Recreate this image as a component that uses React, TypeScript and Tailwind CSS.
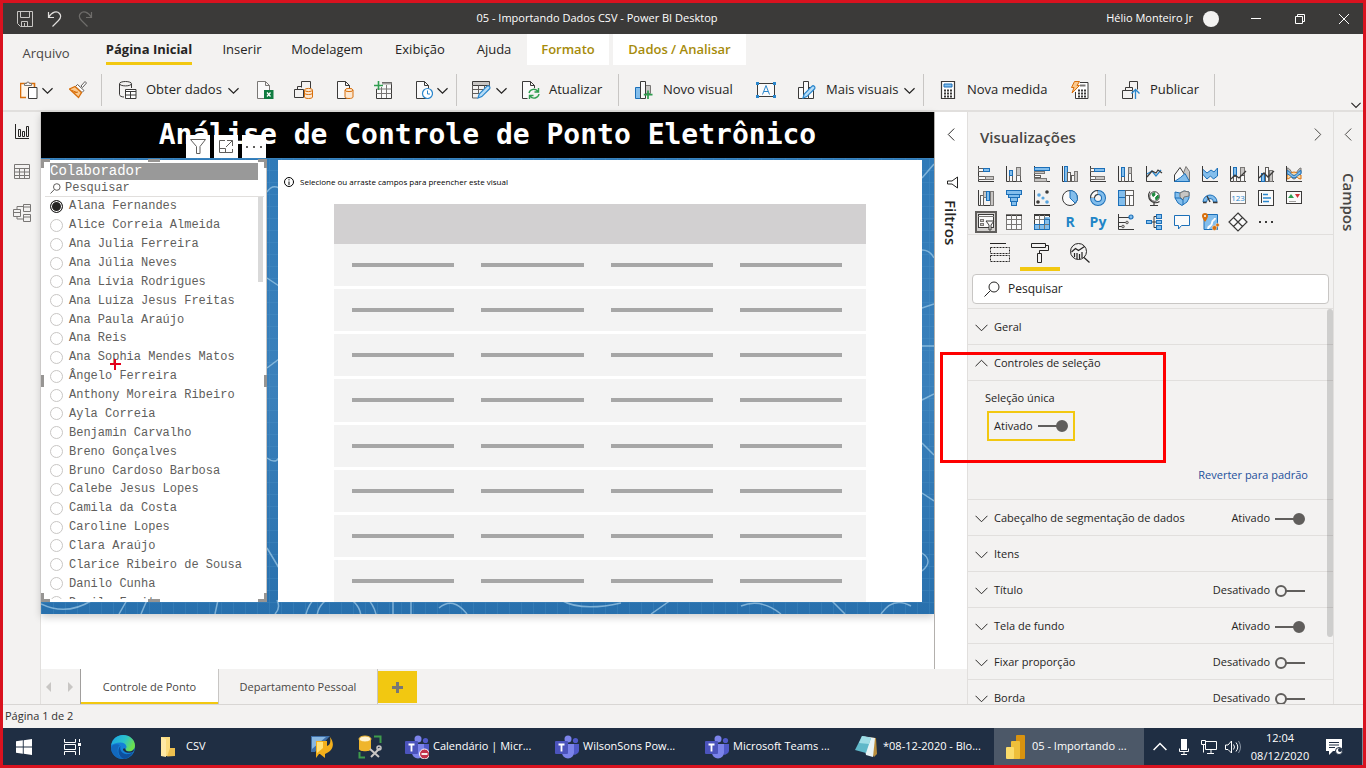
import React from "react";

type Kids = { children?: React.ReactNode };

const DARK = "#3b3a39";
const BLUE = "#1b6fb8";
const SKY = "#83beec";

const people = [
  "Alana Fernandes",
  "Alice Correia Almeida",
  "Ana Julia Ferreira",
  "Ana Júlia Neves",
  "Ana Lívia Rodrigues",
  "Ana Luiza Jesus Freitas",
  "Ana Paula Araújo",
  "Ana Reis",
  "Ana Sophia Mendes Matos",
  "Ângelo Ferreira",
  "Anthony Moreira Ribeiro",
  "Ayla Correia",
  "Benjamin Carvalho",
  "Breno Gonçalves",
  "Bruno Cardoso Barbosa",
  "Calebe Jesus Lopes",
  "Camila da Costa",
  "Caroline Lopes",
  "Clara Araújo",
  "Clarice Ribeiro de Sousa",
  "Danilo Cunha",
  "Danilo Freitas",
];

/* ---------- icon helpers ---------- */

function Ico({ children, w = 18, h = 18, stroke = DARK }: Kids & { w?: number; h?: number; stroke?: string }) {
  return (
    <svg width={w} height={h} viewBox={`0 0 ${w} ${h}`} fill="none" stroke={stroke} className="block shrink-0" aria-hidden="true">
      {children}
    </svg>
  );
}

const tones = {
  b: [SKY, BLUE],
  g: ["#c8c6c4", "#797775"],
  w: ["#fafafa", "#605e5c"],
  o: ["#fce3c4", "#d86f0b"],
} as const;

function Box({ t, x, y, w, h }: { t: keyof typeof tones; x: number; y: number; w: number; h: number }) {
  return <rect x={x + 0.5} y={y + 0.5} width={w - 1} height={h - 1} fill={tones[t][0]} stroke={tones[t][1]} />;
}

const Axis = () => <path d="M.5 0v15.5H16" stroke={DARK} />;

function Chevron({ dir = "down", w = 11, thin }: { dir?: "down" | "up" | "left" | "right"; w?: number; thin?: boolean }) {
  const d = {
    down: "M.5 3.500l5.500 5.500 5.500-5.500",
    up: "M.5 8.500L6 3l5.500 5.500",
    left: "M8.500.5L3 6l5.500 5.500",
    right: "M3.500.5L9 6l-5.500 5.500",
  }[dir];
  return (
    <svg width={w} height={w} viewBox="0 0 12 12" fill="none" stroke="currentColor" strokeWidth={thin ? 0.9 : 1.3} className="block shrink-0" aria-hidden="true">
      <path d={d} />
    </svg>
  );
}

const Pencil = ({ x = 6, y = 6 }: { x?: number; y?: number }) => (
  <path d={`M${x} ${y + 12}l1.200-4 7.600-7.600a1.500 1.500 0 0 1 2.600 2.600l-7.600 7.600z`} fill="#b5dcf7" stroke="#2a86cc" strokeWidth="1.200" />
);

const Drum = ({ x, y, w, h, c = "#d86f0b", f = "#fce8d2" }: { x: number; y: number; w: number; h: number; c?: string; f?: string }) => (
  <g stroke={c} fill={f}>
    <path d={`M${x} ${y}v${h}c0 2 ${w} 2 ${w} 0v-${h}`} />
    <ellipse cx={x + w / 2} cy={y} rx={w / 2} ry="1.6" />
  </g>
);

/* ---------- visualization gallery ---------- */

const gallery: { name: string; art: React.ReactNode }[] = [
  { name: "Gráfico de barras empilhadas", art: <><Axis /><Box t="w" x={0} y={2} w={6} h={4} /><Box t="b" x={5} y={2} w={7} h={4} /><Box t="w" x={0} y={10} w={8} h={4} /><Box t="g" x={7} y={10} w={9} h={4} /></> },
  { name: "Gráfico de colunas empilhadas", art: <><Axis /><Box t="w" x={3} y={9} w={4} h={7} /><Box t="b" x={3} y={4} w={4} h={6} /><Box t="w" x={10} y={9} w={5} h={7} /><Box t="g" x={10} y={1} w={5} h={9} /></> },
  { name: "Gráfico de barras clusterizado", art: <><Axis /><Box t="b" x={0} y={1} w={16} h={4} /><Box t="g" x={0} y={5} w={11} h={3} /><Box t="w" x={0} y={9} w={7} h={3} /><Box t="g" x={0} y={12} w={13} h={4} /></> },
  { name: "Gráfico de colunas clusterizado", art: <><Axis /><Box t="b" x={2} y={0} w={4} h={16} /><Box t="w" x={5} y={6} w={4} h={10} /><Box t="w" x={9} y={9} w={4} h={7} /><Box t="g" x={12} y={5} w={4} h={11} /></> },
  { name: "Gráfico de barras 100% empilhadas", art: <><Axis /><Box t="w" x={0} y={2} w={5} h={4} /><Box t="b" x={4} y={2} w={11} h={4} /><Box t="w" x={0} y={10} w={6} h={4} /><Box t="g" x={5} y={10} w={10} h={4} /></> },
  { name: "Gráfico de colunas 100% empilhadas", art: <><Axis /><Box t="w" x={3} y={10} w={4} h={6} /><Box t="b" x={3} y={1} w={4} h={10} /><Box t="w" x={10} y={7} w={4} h={9} /><Box t="g" x={10} y={1} w={4} h={7} /></> },
  { name: "Gráfico de linhas", art: <><Axis /><path d="M1 8l5-3 4 5 5-6" stroke="#2a86cc" strokeWidth="1.3" /><path d="M1 11l5-6 4 2 2-3 4 3" strokeWidth="1.2" /></> },
  { name: "Gráfico de áreas", art: <><path d="M6 15.5L12 .5l3.500 5v10z" fill="#c8c6c4" stroke="#797775" /><path d="M.5 9L6 1.500l4.500 7L6 15.500H.5z" fill="#fafafa" /><path d="M.5 15.500l6-4 4.500-4 4.500 8z" fill={SKY} stroke={BLUE} /></> },
  { name: "Gráfico de áreas empilhadas", art: <><path d="M.5 3l4.500 4 4-3 3 2 3.500-4v8l-4 3-3-3-3.500 3-4.500-5z" fill={SKY} stroke={BLUE} /><Axis /></> },
  { name: "Gráfico de linhas e colunas empilhadas", art: <><Axis /><Box t="b" x={3} y={1} w={4} h={10} /><Box t="w" x={3} y={10} w={4} h={6} /><Box t="g" x={10} y={1} w={5} h={9} /><Box t="w" x={10} y={9} w={5} h={7} /><path d="M1 13l4-4 4 3 7-7" strokeWidth="1.300" /></> },
  { name: "Gráfico de linhas e colunas clusterizadas", art: <><Axis /><Box t="b" x={3} y={7} w={4} h={9} /><Box t="w" x={7} y={1} w={4} h={15} /><Box t="g" x={11} y={4} w={4} h={12} /><path d="M1 12l5-5 4 4 6-6" strokeWidth="1.300" /></> },
  { name: "Gráfico da faixa de opções", art: <><path d="M1 2c4 0 4 6 7 6s4-6 7-6v5c-3 0-4 6-7 6s-3-6-7-6z" fill="#bdbbb9" stroke="#797775" /><path d="M1 9c3 0 3-3 7-3s4 3 7 3v4c-4 0-3-3-7-3s-4 3-7 3z" fill="#fbd9a8" stroke="#d86f0b" /><path d="M1 4.500c3 0 4 5 7 5s4-5 7-5V8c-3 0-4 4-7 4s-4-4-7-4z" fill={SKY} stroke={BLUE} /><path d="M.5 0v15.500H16" /></> },
  { name: "Gráfico de cascata", art: <><Axis /><Box t="w" x={2} y={5} w={4} h={11} /><Box t="g" x={5} y={1} w={4} h={7} /><Box t="b" x={8} y={1} w={4} h={10} /><Box t="g" x={12} y={1} w={4} h={15} /></> },
  { name: "Funil", art: <><Box t="b" x={0} y={0} w={16} h={5} /><Box t="b" x={2} y={4} w={12} h={4} /><Box t="b" x={4} y={7} w={8} h={5} /><Box t="b" x={5} y={11} w={6} h={5} /></> },
  { name: "Gráfico de dispersão", art: <><path d="M.5 0v15.500H16" stroke={DARK} /><g stroke="none"><circle cx="13" cy="2" r="1.800" fill={DARK} /><circle cx="5" cy="5" r="1.800" fill="#5aa6e0" /><circle cx="9" cy="8" r="1.600" fill="#5aa6e0" /><circle cx="4" cy="12" r="1.800" fill={DARK} /><circle cx="13" cy="12" r="1.800" fill="#5aa6e0" /></g></> },
  { name: "Gráfico de pizza", art: <><circle cx="8" cy="8" r="7.500" fill="#fafafa" /><path d="M8 .5v7.500l5.300 5.300A7.500 7.500 0 0 0 8 .5z" fill={SKY} stroke={BLUE} /></> },
  { name: "Gráfico de rosca", art: <><circle cx="8" cy="8" r="5.500" stroke={BLUE} strokeWidth="5" /><circle cx="8" cy="8" r="5.500" stroke={SKY} strokeWidth="3" /><path d="M8 2.500A5.500 5.500 0 0 0 2.500 8" stroke={DARK} strokeWidth="5" /><path d="M7.600 2.500A5.500 5.500 0 0 0 2.500 7.600" stroke="#fafafa" strokeWidth="3" /></> },
  { name: "Treemap", art: <><Box t="b" x={0} y={0} w={8} h={8} /><Box t="b" x={0} y={7} w={8} h={9} /><Box t="w" x={7} y={0} w={9} h={6} /><Box t="w" x={7} y={5} w={5} h={11} /><Box t="w" x={11} y={5} w={5} h={11} /></> },
  { name: "Mapa", art: <><circle cx="8.500" cy="6.500" r="4.800" fill="#fafafa" /><path d="M6 4l2.500-1.500L9 5 7 6.500zM9.500 7.500L12 5l.5 3-2.500 2z" fill="#1e8a3e" stroke="#1e8a3e" /><path d="M4 1.500a7 7 0 0 0 9.500 10M8 13v2.500M4 15.500h8" strokeWidth="1.200" /></> },
  { name: "Mapa coroplético", art: <><path d="M1 2l5 1 4-2 5 1v6l-2 4-5 3.500L4 13 1 8z" fill={SKY} stroke={BLUE} /><path d="M6 3l4-2 5 1v4l-5 1-1 3-3-3z" fill="#c8c6c4" stroke="#797775" /><path d="M1 8h5l3 2v5" stroke={BLUE} /></> },
  { name: "Medidor", art: <><path d="M1 12a7 7 0 0 1 14 0h-3.500a3.500 3.500 0 0 0-7 0z" fill={SKY} stroke={BLUE} /><path d="M8 12l-3-6M1 12.500h3.500M11 12.500h4.500" stroke={DARK} strokeWidth="1.400" /></> },
  { name: "Cartão", art: <><rect x=".5" y="1.500" width="15" height="12" fill="#fafafa" stroke="#797775" /><text x="8" y="11" fontSize="8" textAnchor="middle" fill="#2a86cc" stroke="none" className="font-['Open_Sans',sans-serif]">123</text></> },
  { name: "Cartão de linha múltipla", art: <><rect x=".5" y=".5" width="15" height="15" fill="#fafafa" /><path d="M3.500 3v10" /><path d="M5 4.500h5M5 8h8M5 11.500h6" stroke="#2a86cc" strokeWidth="1.500" /></> },
  { name: "KPI", art: <><rect x=".5" y="1.500" width="15" height="12" fill="#fafafa" /><path d="M2 8l3-4 3 4z" fill="#2f9e4f" stroke="none" /><path d="M9 4h5l-2.500 4z" fill="#d13438" stroke="none" /><path d="M3 11.500h7" stroke="#a19f9d" /></> },
  { name: "Segmentação de dados", art: <><rect x=".5" y=".5" width="15" height="13" fill="#fafafa" /><path d="M0 2.500h16" stroke="#797775" /><Box t="g" x={2} y={5} w={4} h={3} /><Box t="g" x={2} y={9} w={4} h={3} /><path d="M8 7h8l-3 4v5h-2v-5z" fill="#fafafa" /></> },
  { name: "Tabela", art: <><rect x=".5" y=".5" width="15" height="15" fill="#fafafa" stroke="#797775" /><path d="M0 1.500h16" stroke={DARK} /><path d="M5.500 1v15M10.500 1v15M0 5.500h16M0 10.500h16" stroke="#797775" /></> },
  { name: "Matriz", art: <><rect x=".5" y=".5" width="15" height="15" fill="#fafafa" stroke={DARK} /><path d="M11 3h5v13H1v-5h10z" fill={SKY} stroke="none" /><path d="M0 1.500h16" /><path d="M5.500 1v15M10.500 1v15M0 5.500h16M0 10.500h16" stroke="#797775" /><path d="M10.500 5v5.500H.5v5h15V5.500z" stroke={BLUE} /></> },
  { name: "Visual do script R", art: null },
  { name: "Visual do Python", art: null },
  { name: "Principais influenciadores", art: <><Axis /><path d="M0 3.500h11M0 8.500h8M0 12.500h4" stroke={DARK} /><circle cx="13" cy="3" r="2" fill={SKY} stroke={BLUE} strokeWidth="1.200" /><circle cx="9" cy="8.500" r="1.300" fill="#c8c6c4" stroke="#605e5c" /><circle cx="5" cy="12.500" r="1.300" fill="#c8c6c4" stroke="#605e5c" /></> },
  { name: "Árvore hierárquica", art: <><path d="M5 8h3M8 2.500v11M8 2.500h2M8 8h2M8 13.500h2" stroke={DARK} /><Box t="b" x={0} y={6} w={6} h={4} /><Box t="b" x={10} y={0} w={6} h={5} /><Box t="b" x={10} y={6} w={6} h={4} /><Box t="b" x={10} y={11} w={6} h={5} /></> },
  { name: "P e R", art: <path d="M.5 1.500h15v10H7.500l-3 3.500v-3.500h-4z" fill="#fafafa" stroke={BLUE} /> },
  { name: "ArcGIS Maps", art: <><path d="M2 .5h13.500v15H2z" fill={SKY} stroke={BLUE} /><path d="M6 15c0-4 4-2 4-6s3-2 3-5" stroke="#fafafa" strokeWidth="2" /><path d="M3-1a3 3 0 0 1 3 3c0 2-3 6-3 6S0 4 0 2a3 3 0 0 1 3-3z" fill="#d86f0b" stroke="none" /><circle cx="3" cy="2" r="1" fill="#fff" stroke="none" /><circle cx="15.500" cy="11" r="1.800" fill="#d86f0b" stroke="#f3f2f1" strokeWidth=".5" /><circle cx="12.500" cy="14" r="2.400" fill="#d86f0b" stroke="#f3f2f1" strokeWidth=".5" /></> },
  { name: "Power Apps", art: <path d="M8-1l4.500 4.500L8 8 3.500 3.500zM12.500 3.500L17 8l-4.500 4.500L8 8zM8 8l4.500 4.500L8 17l-4.500-4.500zM3.500 3.500L8 8l-4.500 4.500L-1 8z" fill="#fafafa" strokeWidth="1.200" /> },
  { name: "Mais opções", art: <g fill={DARK} stroke="none"><rect x="1" y="7" width="2" height="2" /><rect x="7" y="7" width="2" height="2" /><rect x="13" y="7" width="2" height="2" /></g> },
];

function Gallery() {
  return (
    <div className="grid w-max grid-cols-[repeat(12,28px)] auto-rows-[24px]">
      {gallery.map((g, i) => (
        <button key={g.name} type="button" aria-label={g.name} className="relative flex items-center justify-center">
          {i === 24 && <span className="absolute h-[22px] w-[22px] border-2 border-[#605e5c] bg-[#d2d0ce]" />}
          {i === 27 && <span className="text-[14px] leading-4 font-bold text-[#2285c7]">R</span>}
          {i === 28 && <span className="text-[14px] leading-4 font-bold text-[#2285c7]">Py</span>}
          {g.art && (
            <svg width="16" height="16" viewBox="0 0 16 16" fill="none" stroke={DARK} className="relative overflow-visible" aria-hidden="true">
              {g.art}
            </svg>
          )}
        </button>
      ))}
    </div>
  );
}

/* ---------- title bar and ribbon ---------- */

function TitleBar() {
  return (
    <header className="grid h-[31px] shrink-0 grid-cols-[1fr_auto_1fr] items-center bg-[#3b3a39] text-[11px] text-white">
      <div className="flex items-center gap-[14px] pl-[14px]">
        <button type="button" aria-label="Salvar">
          <Ico w={16} h={16} stroke="#c8c6c4"><path d="M.5.5h15v15h-12l-3-3zM3.500.5v6h9v-6M4.500 15v-4.500h6V15M7.500 12v3" /></Ico>
        </button>
        <button type="button" aria-label="Desfazer">
          <Ico w={16} h={16} stroke="#e1dfdd"><path d="M1.500 1v5.500H7M1.500 6.500C5 .5 10-.5 12.500 2.500s1 5-1 7l-6 6" strokeWidth="1.200" /></Ico>
        </button>
        <button type="button" aria-label="Refazer">
          <Ico w={16} h={16} stroke="#6e6c6a"><path d="M14.500 1v5.500H9M14.500 6.500C11 .5 6-.5 3.500 2.500s-1 5 1 7l6 6" strokeWidth="1.200" /></Ico>
        </button>
      </div>
      <h1 className="pr-[172px]">05 - Importando Dados CSV - Power BI Desktop</h1>
      <div className="-mr-[3px] flex items-center justify-end">
        <span>Hélio Monteiro Jr</span>
        <span className="ml-[10px] h-4 w-4 rounded-full bg-[#f3f2f1]" />
        <button type="button" aria-label="Minimizar" className="ml-[15px] flex h-7 w-11 items-center justify-center"><Ico w={10} h={10} stroke="#fff"><path d="M0 4.500h10" /></Ico></button>
        <button type="button" aria-label="Restaurar" className="flex h-7 w-11 items-center justify-center"><Ico w={10} h={10} stroke="#fff"><path d="M.5 2.500h7v7h-7zM2.500 2.500v-2h7v7h-2" /></Ico></button>
        <button type="button" aria-label="Fechar" className="flex h-7 w-11 items-center justify-center"><Ico w={10} h={10} stroke="#fff"><path d="M0 0l10 10M10 0L0 10" /></Ico></button>
      </div>
    </header>
  );
}

function RibbonTabs() {
  const tab = "flex h-full items-center justify-center pt-px";
  return (
    <nav className="flex h-[31px] text-[13px] text-[#252423]">
      <button type="button" className="flex h-full w-[86px] items-center justify-center pt-2 text-[#484644]">Arquivo</button>
      <button type="button" className="flex h-full w-[120px] items-center justify-center font-bold">
        <span className="flex h-full items-center border-b-3 border-[#f2c811] pt-1">Página Inicial</span>
      </button>
      <button type="button" className={`${tab} w-[66px]`}>Inserir</button>
      <button type="button" className={`${tab} w-[104px]`}>Modelagem</button>
      <button type="button" className={`${tab} w-[82px]`}>Exibição</button>
      <button type="button" className={`${tab} w-[66px]`}>Ajuda</button>
      <button type="button" className={`${tab} w-[82px] bg-white font-semibold text-[#a68b0a]`}>Formato</button>
      <button type="button" className={`${tab} ml-1 w-[133px] bg-white font-semibold text-[#a68b0a]`}>Dados / Analisar</button>
    </nav>
  );
}

const Sep = () => <span className="h-8 w-px shrink-0 bg-[#c8c6c4]" />;

const page = "M1.500.5h8l4 4v13h-12zM9.500.5v4h4";

function Toolbar() {
  const btn = "flex h-full shrink-0 items-center whitespace-nowrap";
  return (
    <div className="flex h-[47px] items-center border-b-2 border-[#e1dfdd] pt-[5px] text-[13px] text-[#252423]">
      <button type="button" aria-label="Colar" className={`${btn} w-[54px] gap-1 pl-[17px]`}>
        <Ico><path d="M6 16.500H.5v-14h14V6" stroke="#d86f0b" strokeWidth="1.600" fill="#fff6ea" /><path d="M4.500 4.500v-2h2a1.500 1.500 0 0 1 3 0h2v2z" fill="#f3f2f1" stroke="#797775" /><path d="M8.500 6.500h8.500v11H8.500z" fill="#fff" /></Ico>
        <Chevron />
      </button>
      <button type="button" aria-label="Pincel de formatação" className={`${btn} w-[44px] justify-center pr-[3px]`}>
        <Ico><path d="M12 5l4-4.500 1.500 1.500-4 4.500z" fill="#fff" stroke="#605e5c" /><path d="M8.500 3.500l6.500 6-2 2-6.500-6z" fill="#fff" stroke="#605e5c" /><path d="M6 5.500l6.500 6L9.500 16.500.5 8z" fill="#fbc98e" stroke="#d86f0b" strokeWidth="1.300" /><path d="M3 9.500l5 2M5 12l4-1" stroke="#d86f0b" /></Ico>
      </button>
      <Sep />
      <button type="button" className={`${btn} w-[146px] pl-[17px]`}>
        <Ico><path d="M.5 3v10.500c0 1.500 2 2.500 4.500 2.500M12.500 3v4" /><ellipse cx="6.500" cy="2.700" rx="6" ry="2.200" /><path d="M6.500 8.500h10.500v9H6.500zM6.500 10.500h10.500M6.500 14h10.500M11.500 10.500v7" fill="#fff" /></Ico>
        <span className="mr-[6px] ml-[9px]">Obter dados</span>
        <Chevron />
      </button>
      <button type="button" aria-label="Excel" className={`${btn} w-[34px] justify-center`}>
        <Ico><path d={page} fill="#fafafa" stroke="#797775" /><rect x="8" y="9" width="9.500" height="9" fill="#107c41" stroke="none" /><path d="M11 11.500l3.500 4M14.500 11.500l-3.500 4" stroke="#fff" strokeWidth="1.200" /></Ico>
      </button>
      <button type="button" aria-label="Conjuntos de dados do Power BI" className={`${btn} w-[43px] justify-center`}>
        <Ico w={19}><path d="M7.500 6.500v-6h9v7M.500 8.500h9M.5 8.500v8h9v-8M3.500 8V5.500h4" /><Drum x={10.5} y={9} w={8} h={7} /><path d="M10.500 12c0 2 8 2 8 0" stroke="#d86f0b" /></Ico>
      </button>
      <button type="button" aria-label="SQL Server" className={`${btn} w-[39px] justify-center`}>
        <Ico><path d={page} fill="#fafafa" /><Drum x={9} y={9} w={8} h={7} /></Ico>
      </button>
      <button type="button" aria-label="Inserir dados" className={`${btn} w-[38px] justify-center`}>
        <Ico><path d="M2.500 8v9.500h15v-16H8" fill="#fafafa" /><path d="M8 2.500h9.500" stroke="#a19f9d" strokeWidth="2" /><path d="M2.500 12.500h15M2.500 8h15M7.500 6v11M12.500 4v13" stroke="#797775" /><path d="M4.500 0v9M0 4.500h9" stroke="#2f9e4f" strokeWidth="1.600" /></Ico>
      </button>
      <button type="button" aria-label="Fontes recentes" className={`${btn} w-[54px] gap-1 pl-[13px]`}>
        <Ico><path d={page} fill="#fafafa" /><circle cx="12.500" cy="12.500" r="5" fill="#fff" stroke="#2a86cc" strokeWidth="1.200" /><path d="M12.500 9.500v3.500H15" stroke="#2a86cc" /></Ico>
        <Chevron />
      </button>
      <Sep />
      <button type="button" aria-label="Transformar dados" className={`${btn} w-[55px] gap-1 pl-[15px]`}>
        <Ico w={20}><path d="M.5.5h17v4H.5z" fill="#c8c6c4" /><path d="M.5 4.500V17h5M17.500 1.500V6M.5 8.500h12M.5 12.500h8M6.500 4.500V13M12.500 4.500v4" stroke="#605e5c" /><Pencil x={6} y={5} /></Ico>
        <Chevron />
      </button>
      <button type="button" className={`${btn} w-[106px] gap-[9px] pl-[10px]`}>
        <Ico><path d="M5.500 17.500H.5V.500h8l4 4V7M8.500.5v4h4" fill="#fafafa" /><path d="M7 12a5 5 0 0 1 9-1.500M17 13a5 5 0 0 1-9 2M16.500 7v4h-4M7.500 18v-3.500h4" stroke="#2f9e4f" strokeWidth="1.400" /></Ico>
        Atualizar
      </button>
      <Sep />
      <button type="button" className={`${btn} w-[126px] gap-[10px] pl-[16px]`}>
        <Ico><path d="M.5 6.500h5v11h-5z" fill={SKY} stroke={BLUE} /><path d="M10.500 4.500h5v8h-5z" fill="#c8c6c4" stroke="#797775" /><path d="M5.500.5h5v17h-5z" fill="#fafafa" /><path d="M13 9.500v8.500M8.800 13.700h8.700" stroke="#2f9e4f" strokeWidth="1.700" /></Ico>
        Novo visual
      </button>
      <button type="button" aria-label="Caixa de texto" className={`${btn} w-[42px] justify-center`}>
        <Ico w={20} h={16}><path d="M1.500 1.500h17v13h-17z" fill="#fafafa" /><path d="M0 0h3v3H0zM17 0h3v3h-3zM0 13h3v3H0zM17 13h3v3h-3z" fill="#2a86cc" stroke="none" /><path d="M6.500 12.500L10 3.500l3.500 9M8 9.500h4" stroke="#2a86cc" /></Ico>
      </button>
      <button type="button" className={`${btn} w-[136px] pl-[11px]`}>
        <Ico><path d="M.5 6.500h5v11h-5zM5.500.5h5v17h-5zM10.500 6.500h5v11h-5z" fill="#fafafa" /><Pencil x={5} y={5} /></Ico>
        <span className="mr-[6px] ml-[10px]">Mais visuais</span>
        <Chevron />
      </button>
      <Sep />
      <button type="button" className={`${btn} w-[136px] gap-[10px] pl-[15px]`}>
        <Ico><path d="M2.500.5h13v17h-13z" fill="#fff" strokeWidth="1.200" /><path d="M5 3h8v3H5z" fill={SKY} stroke={BLUE} /><path d="M5 9.500h8M5 12.500h8M5 15.500h8" strokeWidth="2" strokeDasharray="2 1" /></Ico>
        Nova medida
      </button>
      <button type="button" aria-label="Medida rápida" className={`${btn} w-[45px] justify-center pr-[6px]`}>
        <Ico><path d="M9 1.500h8v16H4.500V11" fill="#fff" /><path d="M9 4.500h5.500" stroke="#797775" strokeWidth="2" /><path d="M7 9.500h8M7 12.500h8M7 15.500h8" strokeWidth="2" strokeDasharray="2 1" /><path d="M3.500.5h5L6 4.500h2.500L1 12l2-5.500H.5z" fill="#fbc98e" stroke="#d86f0b" /></Ico>
      </button>
      <Sep />
      <button type="button" className={`${btn} w-[108px] gap-[10px] pl-[16px]`}>
        <Ico><path d="M7.500 6.500v-6h8v8M.5 9.500h10v8H.5zM3.500 9V6.500h7V9" fill="none" /><path d="M13.500 18V8.500M9.500 12.500l4-4 4 4" stroke="#2a86cc" strokeWidth="1.300" /></Ico>
        Publicar
      </button>
      <Sep />
      <button type="button" aria-label="Recolher faixa de opções" className="mr-[2px] ml-auto self-end"><Chevron w={10} /></button>
    </div>
  );
}

/* ---------- report canvas ---------- */

function ViewRail() {
  return (
    <nav className="flex w-[38px] shrink-0 flex-col items-center gap-6 border-r border-[#e1dfdd] pt-3">
      <button type="button" aria-label="Relatório"><Ico w={14} h={16} stroke="#252423"><path d="M.5 0v14.500H14M3.500 5.500h2v7h-2zM7.500 7.500h2v5h-2zM11.500 2.500h2v10h-2z" /></Ico></button>
      <button type="button" aria-label="Dados"><Ico w={16} h={16} stroke="#797775"><path d="M.5.5h15v14H.5zM.5 4.500h15M.5 8h15M.5 11.500h15M5.500 4v10.500M10.500 4v10.500" /></Ico></button>
      <button type="button" aria-label="Modelo"><Ico w={18} h={18} stroke="#797775"><path d="M10.500.5h7v7h-7zM10.500 3h7M.5 5.500h7v7h-7zM.5 8.500h7M10.500 10.500h7v7h-7zM10.500 13h7M4 5.500v-3h6.500M4 12.500v2.500h6.500" /></Ico></button>
    </nav>
  );
}

function Blueprint() {
  return (
    <svg viewBox="0 0 893 456" preserveAspectRatio="none" className="absolute inset-0 h-full w-full" aria-hidden="true">
      <defs>
        <pattern id="grid" width="12" height="12" patternUnits="userSpaceOnUse">
          <path d="M0 .5h12M.5 0v12" stroke="#5a9ccb" strokeWidth=".6" opacity=".35" />
        </pattern>
        <linearGradient id="wash" x1="0" y1="0" x2="0" y2="1">
          <stop offset="0" stopColor="#2f7ab8" />
          <stop offset=".5" stopColor="#3a80bb" />
          <stop offset="1" stopColor="#2870ad" />
        </linearGradient>
      </defs>
      <rect width="893" height="456" fill="url(#wash)" />
      <rect width="893" height="456" fill="url(#grid)" />
      <g fill="none" stroke="#9cc8e6" strokeWidth="1.500" opacity=".75">
        <path d="M226 34q5-8 12-4M226 120l12 8M226 210l12-9M226 300q8 6 12 0M226 390l12 20" />
        <path d="M881 20l12-14M881 92q8 0 12 8M881 150l12-4M881 188h12M881 242l12-6M881 285l12 12M881 335l12 8M881 395q12 8 0 18" />
        <path d="M0 446q25 12 50-3M78 456l8-14M100 456l6-14M174 456l3-14M236 442q4 8-2 14" />
        <circle cx="300" cy="465" r="36" /><circle cx="298" cy="460" r="22" />
        <path d="M352 456v-14M370 456v-14M398 450q14-12 28 6M520 442q20 12 60 3M610 456l20-14M700 448q20-8 40 8M790 442l14 14M840 456q12-18 30-8" />
      </g>
    </svg>
  );
}

function Slicer() {
  const h = "absolute bg-[#979593]";
  return (
    <section className="relative flex w-[226px] shrink-0 flex-col border-r border-[#c8c6c4] bg-white pt-[3px] pl-[9px]">
      <h3 className="mr-2 h-[17px] bg-[#999999] font-['Liberation_Mono',monospace] text-[14px] leading-[17px] text-white">Colaborador</h3>
      <label className="-ml-[5px] mr-[2px] flex h-[17px] items-center gap-1 border-b border-[#e1dfdd] pl-[5px]">
        <Ico w={11} h={11} stroke="#605e5c"><circle cx="6.800" cy="4" r="3.300" /><path d="M4.300 6.500L.5 10.500" /></Ico>
        <input aria-label="Pesquisar colaborador" placeholder="Pesquisar" className="w-40 bg-transparent font-['Liberation_Mono',monospace] text-[12px] leading-[15px] outline-none placeholder:text-[#605e5c]" />
      </label>
      <div className="relative h-[402px] overflow-hidden">
        <div className="grid h-[415px] auto-rows-fr">
          {people.map((p, i) => (
            <label key={p} className="flex items-center gap-[6px] font-['Liberation_Mono',monospace] text-[12px] leading-[18px] text-[#605e5c]">
              <input type="radio" name="colaborador" defaultChecked={i === 0} className="h-[13px] w-[13px] shrink-0 appearance-none rounded-full border border-[#c8c6c4] checked:border-[#252423] checked:bg-[#252423] checked:shadow-[inset_0_0_0_1px_#fff]" />
              {p}
            </label>
          ))}
        </div>
        <span className="absolute top-0 right-[3px] h-[85px] w-[5px] bg-[#d9d9d9]" />
      </div>
      <span className={`${h} -top-px left-0 h-[3px] w-[9px]`} />
      <span className={`${h} -top-px left-0 h-[9px] w-[3px]`} />
      <span className={`${h} -top-px -right-px h-[3px] w-[9px]`} />
      <span className={`${h} -top-px -right-px h-[9px] w-[3px]`} />
      <span className={`${h} bottom-0 left-0 h-[3px] w-[9px]`} />
      <span className={`${h} bottom-0 left-0 h-[9px] w-[3px]`} />
      <span className={`${h} -right-px bottom-0 h-[3px] w-[9px]`} />
      <span className={`${h} -right-px bottom-0 h-[9px] w-[3px]`} />
      <span className={`${h} -top-px left-[107px] h-[3px] w-3`} />
      <span className={`${h} bottom-0 left-[107px] h-[3px] w-3`} />
      <span className={`${h} top-1/2 left-0 h-3 w-[3px] -translate-y-1/2`} />
      <span className={`${h} top-1/2 -right-px h-3 w-[3px] -translate-y-1/2`} />
      <div className="absolute bottom-full right-0 mb-[2px] flex gap-1">
        <button type="button" aria-label="Filtros do visual" className="flex h-[23px] w-6 items-center justify-center bg-white"><Ico w={16} h={15} stroke="#605e5c"><path d="M.5.5h15l-5.500 7v7H6.500v-7z" /></Ico></button>
        <button type="button" aria-label="Modo de foco" className="flex h-[23px] w-6 items-center justify-center bg-white"><Ico w={14} h={14} stroke="#605e5c"><path d="M6 .5H.5v12h13V9M.5 8.500h6v4M8 .5h5.500V6M13.500.5L7 7" /></Ico></button>
        <button type="button" aria-label="Mais opções do visual" className="flex h-[23px] w-6 items-center justify-center bg-white"><Ico w={16} h={4} stroke="none"><path d="M0 1h2v2H0zM7 1h2v2H7zM14 1h2v2h-2z" fill="#605e5c" /></Ico></button>
      </div>
    </section>
  );
}

function EmptyVisual() {
  return (
    <section className="relative mr-3 ml-[11px] flex flex-1 flex-col bg-white">
      <p className="flex h-11 items-center gap-[6px] pl-[6px] text-[8px] text-black">
        <Ico w={10} h={10} stroke="#000"><circle cx="5" cy="5" r="4.500" /><path d="M5 4.500V8M5 2.200v1.200" /></Ico>
        Selecione ou arraste campos para preencher este visual
      </p>
      <div className="mr-14 ml-14 flex flex-1 flex-col gap-[3px]">
        <div className="-mb-[3px] h-10 bg-[#d2d0d1]" />
        {Array.from({ length: 8 }, (_, r) => (
          <div key={r} className="grid flex-1 grid-cols-4 items-center gap-[27px] bg-[#f3f3f3] pr-6 pl-[18px]">
            {[0, 1, 2, 3].map((c) => (
              <span key={c} className="h-1 bg-[#a6a6a6]" />
            ))}
          </div>
        ))}
      </div>
    </section>
  );
}

function Report() {
  return (
    <div className="min-w-0 flex-1 bg-white">
      <div className="flex h-[502px] flex-col shadow-[0_3px_8px_rgba(0,0,0,0.2)]">
        <h2 className="flex h-[46px] shrink-0 items-center justify-center bg-black font-['DejaVu_Sans_Mono',monospace] text-[28px] leading-8 font-bold whitespace-nowrap text-white">
          Análise de Controle de Ponto Eletrônico
        </h2>
        <div className="relative flex flex-1 pt-[2px] pb-3">
          <Blueprint />
          <Slicer />
          <EmptyVisual />
        </div>
      </div>
    </div>
  );
}

function PageTabs() {
  return (
    <div className="flex h-[35px] shrink-0 text-[11px] text-[#484644]">
      <div className="flex w-10 items-center justify-between border-r border-[#a19f9d] pr-[7px] pl-[5px]">
        <button type="button" aria-label="Página anterior"><Ico w={6} h={10} stroke="none"><path d="M5 0v10L0 5z" fill="#c8c6c4" /></Ico></button>
        <button type="button" aria-label="Próxima página"><Ico w={6} h={10} stroke="none"><path d="M1 0v10l5-5z" fill="#c8c6c4" /></Ico></button>
      </div>
      <button type="button" className="w-[137px] border-b-2 border-[#f2c811] bg-white pt-[3px]">Controle de Ponto</button>
      <button type="button" className="w-[160px] border-r border-l border-[#c8c6c4] pt-px">Departamento Pessoal</button>
      <button type="button" aria-label="Nova página" className="mt-[2px] mb-px flex w-[39px] items-center justify-center bg-[#f2c811]"><Ico w={11} h={11} stroke="#797775"><path d="M5.500 0v11M0 5.500h11" strokeWidth="3" /></Ico></button>
    </div>
  );
}

/* ---------- side panes ---------- */

function FiltersPane() {
  return (
    <aside className="flex w-[33px] shrink-0 flex-col items-center border-l border-[#b3b0ad] bg-white pt-4 text-[#252423]">
      <button type="button" aria-label="Expandir filtros"><Chevron dir="left" w={13} thin /></button>
      <span className="mt-[35px] ml-[3px]"><Ico w={11} h={13} stroke="#252423"><path d="M10.500 1v11L5 8H.5V5H5z" /></Ico></span>
      <h2 className="mt-[11px] text-[15px] leading-4 font-semibold [writing-mode:vertical-rl]">Filtros</h2>
    </aside>
  );
}

function FieldsPane() {
  return (
    <aside className="flex w-[30px] shrink-0 flex-col items-center border-l border-[#e1dfdd] pt-4 text-[#484644]">
      <button type="button" aria-label="Expandir campos"><Chevron dir="left" w={13} thin /></button>
      <h2 className="mt-8 text-[15px] leading-4 font-semibold [writing-mode:vertical-rl]">Campos</h2>
    </aside>
  );
}

function Toggle({ on, name }: { on: boolean; name: string }) {
  return (
    <label className="flex items-center gap-[5px]">
      {on ? "Ativado" : "Desativado"}
      <input
        type="checkbox"
        aria-label={name}
        defaultChecked={on}
        className="relative h-3 w-[30px] appearance-none before:absolute before:top-[5px] before:right-0 before:h-[2px] before:w-[19px] before:bg-[#605e5c] after:absolute after:top-0 after:left-0 after:h-3 after:w-3 after:rounded-full after:border-2 after:border-[#605e5c] checked:before:right-auto checked:before:left-0 checked:after:right-0 checked:after:left-auto checked:after:bg-[#605e5c]"
      />
    </label>
  );
}

function Row({ title, open, on }: { title: string; open?: boolean; on?: boolean }) {
  return (
    <div className="flex h-9 shrink-0 items-center border-b border-[#e1dfdd] pt-[2px] pr-[28px] pl-[7px]">
      <button type="button" className="flex items-center gap-[6px]">
        <Chevron dir={open ? "up" : "down"} w={13} thin />
        {title}
      </button>
      {on !== undefined && <span className="ml-auto"><Toggle on={on} name={title} /></span>}
    </div>
  );
}

function VisualizationsPane() {
  return (
    <aside className="flex w-[366px] shrink-0 flex-col overflow-hidden border-l border-[#e1dfdd] text-[11px] text-[#252423]">
      <div className="flex h-[50px] shrink-0 items-center justify-between pr-[9px] pl-3 text-[#484644]">
        <h2 className="text-[15px] font-semibold">Visualizações</h2>
        <button type="button" aria-label="Recolher visualizações" className="pb-[5px]"><Chevron dir="right" w={13} thin /></button>
      </div>
      <div className="h-[73px] shrink-0 border-b border-[#e1dfdd] pl-1"><Gallery /></div>
      <div className="flex h-9 shrink-0 pl-3">
        <button type="button" aria-label="Campos do visual" className="flex w-10 justify-center pt-2">
          <Ico w={20} h={20} stroke="#252423"><path d="M0 .5h16" /><path d="M.5 4.500h19v6H.5zM.5 12.500h19v6H.5z" strokeDasharray="2 1" /></Ico>
        </button>
        <button type="button" aria-label="Formato do visual" className="flex w-10 justify-center border-b-4 border-[#f2c811] pt-2">
          <Ico w={18} h={20} stroke="#252423"><path d="M.5.5h14v4H.5zM14.500 2.500h3v5h-9v3M6.500 10.500h4v9h-4z" /></Ico>
        </button>
        <button type="button" aria-label="Análise" className="flex w-10 justify-center pt-2">
          <Ico w={20} h={20} stroke="#252423"><circle cx="8.500" cy="8.500" r="8" /><path d="M14 14.500l5.500 5M1.500 9l4-3.500 3 2 6-4M4.500 14v-4M7 16v-6M9.500 16v-5M12 15V9" strokeWidth="1.200" /></Ico>
        </button>
      </div>
      <label className="mt-[3px] mr-1 ml-1 flex h-[30px] shrink-0 items-center gap-2 rounded-sm border border-[#c8c6c4] bg-white pl-[11px]">
        <Ico w={16} h={16} stroke="#252423"><circle cx="10" cy="6" r="5" /><path d="M6.500 9.500l-6 6" /></Ico>
        <input aria-label="Pesquisar" placeholder="Pesquisar" className="min-w-0 flex-1 bg-transparent text-[12px] outline-none placeholder:text-[#252423]" />
      </label>
      <div className="relative mt-[4px] flex min-h-0 flex-1 flex-col overflow-hidden border-t border-[#e1dfdd]">
        <Row title="Geral" />
        <Row title="Controles de seleção" open />
        <div className="flex h-[119px] shrink-0 flex-col items-start border-b border-[#e1dfdd] pr-[25px] pl-[17px]">
          <span className="mt-2 leading-[18px]">Seleção única</span>
          <div className="mt-1 ml-[2px] flex h-[30px] items-center border-2 border-[#f2c811] px-[5px]"><Toggle on name="Seleção única" /></div>
          <a href="#reverter" className="mt-auto mb-[15px] self-end leading-[18px] text-[#23509c]">Reverter para padrão</a>
        </div>
        <Row title="Cabeçalho de segmentação de dados" on />
        <Row title="Itens" />
        <Row title="Título" on={false} />
        <Row title="Tela de fundo" on />
        <Row title="Fixar proporção" on={false} />
        <Row title="Borda" on={false} />
        <span className="absolute top-0 right-0 h-[328px] w-[6px] rounded-full bg-black/15" />
      </div>
    </aside>
  );
}

/* ---------- taskbar ---------- */

function Teams({ busy }: { busy?: boolean }) {
  return (
    <Ico w={24} h={24} stroke="none">
      <circle cx="13" cy="4" r="3.500" fill="#7b83eb" /><circle cx="20.500" cy="5.500" r="2.600" fill="#5059c9" />
      <path d="M16 9h8v7a4.500 4.500 0 0 1-8 2z" fill="#5059c9" /><path d="M7 9h12v8.500a6 6 0 0 1-12 0z" fill="#7b83eb" />
      <rect y="6" width="13" height="13" rx="1" fill="#4b53bc" />
      <path d="M3.500 9.500h6M6.500 9.500v7" stroke="#fff" strokeWidth="1.800" />
      {busy && <><circle cx="19.500" cy="19" r="5" fill="#c4314b" stroke="#fff" /><path d="M16.500 19h6" stroke="#fff" strokeWidth="1.800" /></>}
    </Ico>
  );
}

function Taskbar() {
  const icon = "flex h-full shrink-0 items-center justify-center";
  const app = "flex h-full w-[150px] shrink-0 items-center gap-1 pl-[11px] whitespace-nowrap";
  return (
    <footer className="flex h-[37px] shrink-0 items-center bg-[#1f2e43] text-[11px] text-white">
      <button type="button" aria-label="Iniciar" className={`${icon} w-[42px]`}>
        <Ico w={16} h={16} stroke="none"><path d="M0 2.300l6.800-1v6.300H0zM7.700 1.200L16 0v7.600H7.700zM0 8.500h6.800v6.300L0 13.800zM7.700 8.500H16V16l-8.300-1.200z" fill="#fff" /></Ico>
      </button>
      <button type="button" aria-label="Visão de tarefas" className={`${icon} w-[54px]`}>
        <Ico w={17} h={16} stroke="#fff"><path d="M.5 0v3.500h11V0M.500 5.500h11v5H.5zM.5 16v-3.500h11V16M15.500 0v3M15.500 8v8" /><rect x="14" y="4" width="3" height="3" fill="#fff" stroke="none" /></Ico>
      </button>
      <button type="button" aria-label="Microsoft Edge" className={`${icon} w-12`}>
        <Ico w={24} h={24} stroke="none">
          <defs><linearGradient id="edge" x1="0" y1="0" x2="1" y2=".4"><stop offset="0" stopColor="#1aa4e8" /><stop offset=".6" stopColor="#2cc3c9" /><stop offset="1" stopColor="#6be04e" /></linearGradient></defs>
          <circle cx="12" cy="12" r="12" fill="#1480d8" />
          <path d="M.2 10C1.500 3.500 6.500 0 12 0c7 0 12 5 12 10.500 0 4-3 6-6 6-2 0-4-1-3.500-2.500 1-1 1-2 1-2.500C15 9 12.500 7.500 9.500 7.500 5 7.500 1.500 9 .2 10z" fill="url(#edge)" />
          <path d="M9 10c-4 3-3 11 3 14-6.500 0-11-4-12-10 0-3.500 4-6 9-4z" fill="#1268bd" />
          <path d="M14.500 14c-.5 1.500 1.500 2.500 3.500 2.500 2.500 0 5-1.500 5.800-4-.3 1.500-.8 3-1.800 4.500-3 1.500-8 1-10-2 0-1.500 1-2.500 2.500-1z" fill="#1f2e43" />
          <path d="M9.500 11c-1.500 5 3 9 8 8 2-.4 3.500-1.200 4.500-1.800-1.500 3.500-5 6.300-9 6.800C7 22 6 14 9.500 11z" fill="#0d4f9e" />
        </Ico>
      </button>
      <button type="button" className={`${app} gap-[10px] pl-[13px]`}>
        <Ico w={16} h={20} stroke="none"><path d="M1 0h9v19H1z" fill="#fbdc7e" /><path d="M10 11h5v8l-8 .5z" fill="#eec04f" /><path d="M1 0l5 2v18l-5-1z" fill="#ffe9a4" /></Ico>
        CSV
      </button>
      <button type="button" aria-label="Importador" className={`${icon} w-[49px]`}>
        <Ico w={24} h={24} stroke="none"><path d="M1 1h19L5 17H1z" fill="#3f6fa8" /><path d="M2 2h14L2 14z" fill="#89b7e0" /><path d="M6 6h11v5c3-1 4-4 3-9 4 5 5 13-5 17v4l-5-4H9l-3 4z" fill="#f4b01c" /><path d="M7 7h6v6l-6 5z" fill="#ffe27a" /></Ico>
      </button>
      <button type="button" aria-label="Configurar banco" className={`${icon} w-12`}>
        <Ico w={24} h={24}><path d="M1 4v10c0 3 12 3 12 0V4z" fill="#efb52c" stroke="none" /><ellipse cx="7" cy="4" rx="6" ry="3" fill="#fff2cf" stroke="#efb52c" /><path d="M16 1.500h6.500V8M1.500 17v5.500H7" stroke="#3f9c4c" strokeWidth="2" /><path d="M12 14l9 8M22 13l-9 9" stroke="#c8c6c4" strokeWidth="2" /><circle cx="21" cy="13" r="2" stroke="#c8c6c4" strokeWidth="1.500" /></Ico>
      </button>
      <button type="button" className={app}><Teams busy />Calendário | Micr...</button>
      <button type="button" className={app}><Teams />WilsonSons Pow...</button>
      <button type="button" className={app}><Teams />Microsoft Teams ...</button>
      <button type="button" className={app}>
        <Ico w={24} h={24} stroke="none"><path d="M8 2l13 1 1 16-3 3z" fill="#b98d3c" /><path d="M7 1l13 2-2 19-7-2z" fill="#e8f4f6" /><path d="M7 1l9 2-5 15-11-3z" fill="#5fb8c9" /><path d="M7 1l9 2-2 6-10-1z" fill="#9fdde6" /></Ico>
        *08-12-2020 - Blo...
      </button>
      <button type="button" className={`${app} gap-[6px] bg-[#4c5868]`}>
        <Ico w={21} h={24} stroke="none"><rect x="11" width="9" height="24" rx="1" fill="#d9930f" /><rect x="6" y="6" width="9" height="18" rx="1" fill="#eebf3a" /><rect x="1" y="12" width="8" height="12" rx="1" fill="#fbdc6a" /></Ico>
        05 - Importando ...
      </button>
      <div className="ml-auto flex h-full items-center">
        <button type="button" aria-label="Mostrar ícones ocultos"><Chevron dir="up" w={14} /></button>
        <span className="ml-3"><Ico w={10} h={16} stroke="#fff"><rect x="2.500" y=".5" width="5" height="10" fill="#fff" /><path d="M.5 9.500v3h9v-3M5 13v2.500M2 15.500h6" /></Ico></span>
        <span className="ml-3"><Ico w={16} h={15} stroke="#fff"><path d="M4.500 2.500h11v8h-11zM10 10.500v4M6 14.500h7M.500 1.500h4v4h-4zM2.500 5.500v8" /></Ico></span>
        <span className="ml-2"><Ico w={16} h={14} stroke="#fff"><path d="M.5 5h2.500l3.500-4v12L3 9.500H.5z" /><path d="M8.500 4.500q2 2.500 0 5M11 2.500q3.500 4.500 0 9" /><path d="M13.500 1q4 6 0 12" stroke="#8a95a3" /></Ico></span>
        <time className="ml-[7px] flex w-16 flex-col items-center leading-[18px]"><span>12:04</span><span>08/12/2020</span></time>
        <button type="button" aria-label="Notificações" className="ml-[14px]">
          <Ico w={17} h={16} stroke="none"><path d="M0 0h16v12H7l-4 4v-4H0z" fill="#fff" /><path d="M3 3.500h10M3 6h10M3 8.500h6" stroke="#1f2e43" /><circle cx="13" cy="12" r="3.500" fill="#fff" stroke="#1f2e43" /><circle cx="14" cy="11" r="2" fill="#1f2e43" /></Ico>
        </button>
        <span className="ml-[19px] h-full w-px bg-[#7c8794]" />
      </div>
    </footer>
  );
}

export default function App() {
  return (
    <div className="relative flex h-screen flex-col overflow-hidden border-3 border-[#d9121f] bg-[#f3f2f1] font-['Open_Sans','Noto_Sans',sans-serif]">
      <TitleBar />
      <div className="shrink-0">
        <RibbonTabs />
        <Toolbar />
      </div>
      <main className="flex min-h-0 flex-1">
        <ViewRail />
        <div className="flex min-w-0 flex-1 flex-col">
          <div className="flex min-h-0 flex-1">
            <Report />
            <FiltersPane />
          </div>
          <PageTabs />
        </div>
        <VisualizationsPane />
        <FieldsPane />
      </main>
      <div className="flex h-6 shrink-0 items-center border-t border-[#d8d6d4] pl-[2px] text-[11px] text-[#323130]">Página 1 de 2</div>
      <Taskbar />
      <span className="pointer-events-none absolute top-[349px] right-[197px] h-[111px] w-[226px] border-3 border-[#fe0000]" />
      <svg width="11" height="11" viewBox="0 0 11 11" className="pointer-events-none absolute top-[356px] left-[107px]" stroke="#e3001b" strokeWidth="2" aria-hidden="true">
        <path d="M5 0v11M0 5h11" />
      </svg>
    </div>
  );
}
